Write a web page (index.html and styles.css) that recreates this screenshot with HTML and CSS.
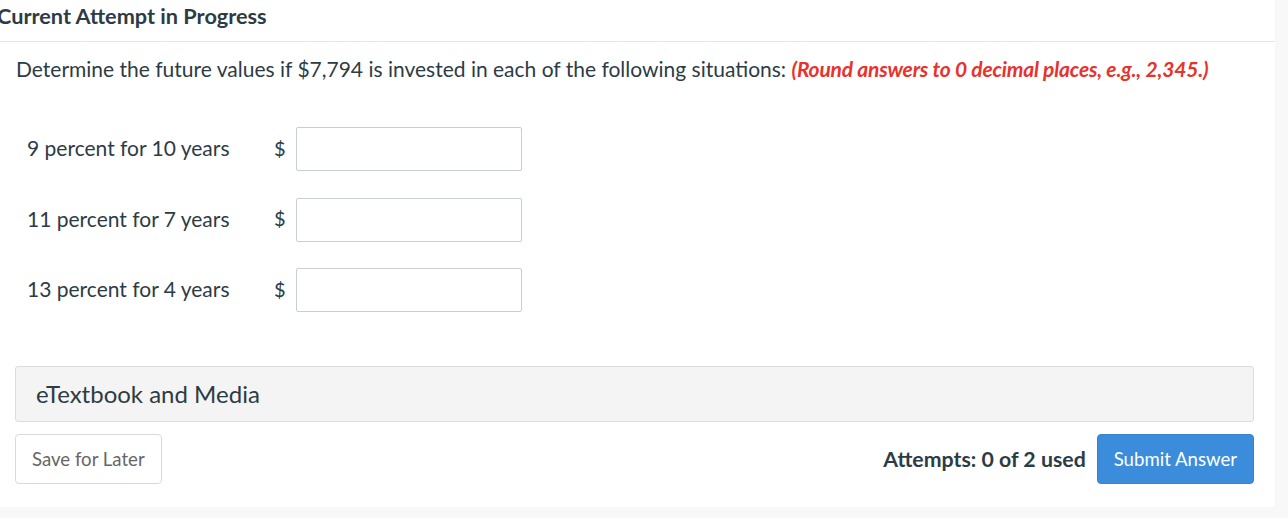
FILE: index.html
```html
<!DOCTYPE html>
<html lang="en">

<head>
    <meta charset="UTF-8">
    <meta name="viewport" content="width=device-width, initial-scale=1.0">
    <title>Current Attempt in Progress</title>
    <link rel="stylesheet" href="styles.css">
</head>

<body>
    <div class="panel">
        <h2 class="attempt-title">Current Attempt in Progress</h2>
        <div class="question">
            <p class="question-text">Determine the future values if $7,794 is invested in each of the following situations: <span class="hint">(Round answers to 0 decimal places, e.g., 2,345.)</span></p>
            <div class="rows">
                <div class="row">
                    <label class="row-label">9 percent for 10 years</label>
                    <span class="unit">$</span>
                    <input type="text" class="answer">
                </div>
                <div class="row">
                    <label class="row-label">11 percent for 7 years</label>
                    <span class="unit">$</span>
                    <input type="text" class="answer">
                </div>
                <div class="row">
                    <label class="row-label">13 percent for 4 years</label>
                    <span class="unit">$</span>
                    <input type="text" class="answer">
                </div>
            </div>
            <div class="media">eTextbook and Media</div>
            <div class="actions">
                <a href="javascript:;" class="btn btn-save">Save for Later</a>
                <div class="actions-right">
                    <span class="attempts">Attempts: 0 of 2 used</span>
                    <a href="javascript:;" class="btn btn-submit">Submit Answer</a>
                </div>
            </div>
        </div>
    </div>
</body>

</html>
```

FILE: styles.css
```css
* {
    margin: 0;
    padding: 0;
    box-sizing: border-box;
}

body {
    background: #f8f8f8;
    font-family: Lato, "Liberation Sans", sans-serif;
    color: #2d3b45;
}

a {
    text-decoration: none;
}

/* 白色面板 */
.panel {
    width: 1275px;
    height: 507px;
    background: #fff;
    overflow: hidden;
}

.attempt-title {
    margin-left: -3px;
    height: 42px;
    padding-top: 3px;
    font-size: 21.7px;
    font-weight: 700;
    line-height: 26px;
    border-bottom: 1px solid #e6e6e6;
}

.question {
    padding: 0 21px 0 15px;
}

.question-text {
    margin-top: 14px;
    padding-left: 1px;
    font-size: 21px;
    line-height: 26px;
    white-space: nowrap;
}

.hint {
    color: #e8322b;
    font-weight: 700;
    font-style: italic;
    letter-spacing: -0.2px;
}

/* 输入行 */
.rows {
    margin-top: 45px;
    padding-left: 12px;
}

.row {
    display: flex;
    align-items: center;
    height: 44px;
    margin-bottom: 26.5px;
}

.row-label {
    width: 247px;
    padding-bottom: 3px;
    font-size: 21px;
}

.unit {
    width: 22px;
    padding-bottom: 3px;
    font-size: 20px;
}

.answer {
    width: 226px;
    height: 44px;
    border: 1px solid #c7cdd1;
    border-radius: 2px;
}

.media {
    margin-top: 54px;
    height: 56px;
    padding-left: 20px;
    line-height: 54px;
    font-size: 24px;
    background: #f4f4f4;
    border: 1px solid #dcdcdc;
    border-radius: 3px;
}

.actions {
    display: flex;
    justify-content: space-between;
    align-items: center;
    margin-top: 12px;
}

.actions-right {
    display: flex;
    align-items: center;
    gap: 11px;
}

.attempts {
    font-size: 21.3px;
    font-weight: 700;
}

.btn {
    display: inline-block;
    height: 50px;
    line-height: 48px;
    padding: 0 16px;
    font-size: 18.6px;
    border: 1px solid #d9d9d9;
    border-radius: 4px;
}

.btn-save {
    color: #666;
    background: #fff;
}

.btn-submit {
    color: #fff;
    background: #3b8ddb;
    border-color: #3683cc;
}
```
